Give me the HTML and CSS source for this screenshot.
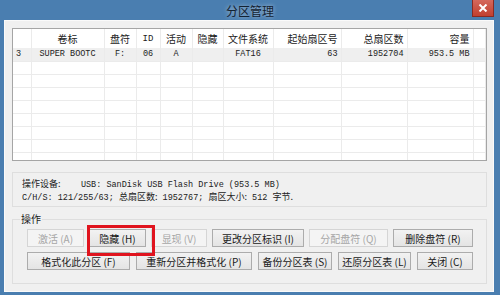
FILE: index.html
```html
<!DOCTYPE html>
<html lang="zh-CN">
<head>
    <meta charset="UTF-8">
    <title>分区管理</title>
    <link rel="stylesheet" href="styles.css">
</head>
<body>
    <div class="window">
        <div class="titlebar">
            <span class="title">分区管理</span>
            <button class="close-btn" title="关闭">
                <svg width="10" height="8" viewBox="0 0 10 8"><path d="M1.5 0.5 L8.5 7.5 M8.5 0.5 L1.5 7.5" stroke="#fff" stroke-width="2"/></svg>
            </button>
        </div>

        <div class="client">
            <div class="list-box">
                <table class="parts">
                    <colgroup>
                        <col style="width:18px"><col style="width:73px"><col style="width:32px">
                        <col style="width:24px"><col style="width:32px"><col style="width:31px">
                        <col style="width:50px"><col style="width:68px"><col style="width:66px">
                        <col style="width:66px"><col>
                    </colgroup>
                    <thead>
                        <tr>
                            <th></th><th>卷标</th><th>盘符</th><th class="mono">ID</th><th>活动</th><th>隐藏</th>
                            <th>文件系统</th><th class="r">起始扇区号</th><th class="r">总扇区数</th><th class="r">容量</th><th></th>
                        </tr>
                    </thead>
                    <tbody>
                        <tr class="sel">
                            <td>3</td><td class="c">SUPER BOOTC</td><td class="c">F:</td><td class="c">06</td><td class="c">A</td><td></td>
                            <td class="c">FAT16</td><td class="r">63</td><td class="r">1952704</td><td class="r">953.5 MB</td><td></td>
                        </tr>
                        <tr><td></td><td></td><td></td><td></td><td></td><td></td><td></td><td></td><td></td><td></td><td></td></tr>
                        <tr><td></td><td></td><td></td><td></td><td></td><td></td><td></td><td></td><td></td><td></td><td></td></tr>
                        <tr><td></td><td></td><td></td><td></td><td></td><td></td><td></td><td></td><td></td><td></td><td></td></tr>
                        <tr><td></td><td></td><td></td><td></td><td></td><td></td><td></td><td></td><td></td><td></td><td></td></tr>
                        <tr><td></td><td></td><td></td><td></td><td></td><td></td><td></td><td></td><td></td><td></td><td></td></tr>
                        <tr><td></td><td></td><td></td><td></td><td></td><td></td><td></td><td></td><td></td><td></td><td></td></tr>
                        <tr><td></td><td></td><td></td><td></td><td></td><td></td><td></td><td></td><td></td><td></td><td></td></tr>
                        <tr><td></td><td></td><td></td><td></td><td></td><td></td><td></td><td></td><td></td><td></td><td></td></tr>
                    </tbody>
                </table>
            </div>

            <div class="info-box">
                <div class="info-line"><span class="cn">操作设备:</span>&nbsp;&nbsp;&nbsp; USB: SanDisk USB Flash Drive (953.5 MB)</div>
                <div class="info-line">C/H/S: 121/255/63; <span class="cn">总扇区数:</span> 1952767; <span class="cn">扇区大小:</span> 512 <span class="cn">字节.</span></div>
            </div>

            <fieldset class="ops">
                <legend>操作</legend>
                <div class="btn-row">
                    <button class="btn w57" disabled>激活 (A)</button>
                    <button class="btn w57 marked">隐藏 (H)</button>
                    <button class="btn w56" disabled>显现 (V)</button>
                    <button class="btn w92">更改分区标识 (I)</button>
                    <button class="btn w79" disabled>分配盘符 (Q)</button>
                    <button class="btn w80">删除盘符 (R)</button>
                </div>
                <div class="btn-row row2">
                    <button class="btn w103">格式化此分区 (F)</button>
                    <button class="btn w116">重新分区并格式化 (P)</button>
                    <button class="btn w74">备份分区表 (S)</button>
                    <button class="btn w73">还原分区表 (L)</button>
                    <button class="btn w56">关闭 (C)</button>
                </div>
            </fieldset>
        </div>
    </div>
</body>
</html>
```

FILE: styles.css
```css
* {
    margin: 0;
    padding: 0;
    box-sizing: border-box;
}

body {
    width: 500px;
    height: 295px;
    overflow: hidden;
    background: #4a7eb0;
    font-family: "Noto Sans CJK SC", sans-serif;
    color: #1a1a1a;
}

.window {
    width: 500px;
    height: 295px;
}

/* Barre de titre */
.titlebar {
    position: relative;
    height: 20px;
    display: flex;
    justify-content: center;
    align-items: center;
}

.title {
    font-size: 12px;
    color: #132232;
    text-shadow: 0 0 4px rgba(255,255,255,0.6);
}

.close-btn {
    position: absolute;
    right: 6px;
    top: 0;
    width: 22px;
    height: 17px;
    border: 1px solid #8a2a22;
    border-top: none;
    background: linear-gradient(#d4685c, #c2402f);
    display: flex;
    justify-content: center;
    align-items: center;
}

.client {
    margin: 0 6px 0 4px;
    height: 272px;
    background: #f0f0f0;
    padding: 7px 6px 0 7px;
    border: 1px solid #fafafa;
}

/* Liste des partitions */
.list-box {
    width: 475px;
    height: 133px;
    overflow: hidden;
    background: #fff;
    border: 1px solid #a5a5a5;
}

.parts {
    width: 100%;
    table-layout: fixed;
    border-collapse: collapse;
    font-size: 8.5px;
    font-family: "Liberation Mono", "Noto Sans CJK SC", monospace;
}

.parts th {
    height: 19px;
    font-family: "Noto Sans CJK SC", sans-serif;
    font-size: 10px;
    font-weight: normal;
    color: #222;
    text-align: center;
    border-right: 1px solid #ebebeb;
    padding: 0 3px;
    white-space: nowrap;
}

.parts th.mono {
    font-family: "Liberation Mono", monospace;
    font-size: 9px;
}

.parts td {
    height: 13px;
    border-right: 1px solid #ebebeb;
    border-bottom: 1px solid #ebebeb;
    padding: 0 3px;
    white-space: nowrap;
    overflow: hidden;
    color: #222;
}

.parts .c { text-align: center; }
.parts .r { text-align: right; }

.parts tr.sel td {
    background: #efefef;
    height: 13px;
}

/* Informations du disque */
.info-box {
    width: 475px;
    height: 35px;
    margin-top: 11px;
    border: 1px solid #dedede;
    padding: 4px 9px 0;
    font-family: "Liberation Mono", "Noto Sans CJK SC", monospace;
    font-size: 8.5px;
    color: #222;
}

.info-line {
    height: 13px;
    line-height: 13px;
    white-space: nowrap;
}

.cn {
    font-family: "Noto Sans CJK SC", sans-serif;
    font-size: 9px;
    line-height: 13px;
}

/* Boutons d'opérations */
.ops {
    position: relative;
    width: 475px;
    height: 71px;
    margin-top: 6px;
    border: 1px solid #dedede;
    padding: 4px 0 0 14px;
}

.ops legend {
    font-size: 10px;
    padding: 0 1px;
    margin-left: -7px;
    line-height: 12px;
}

.btn-row {
    display: flex;
    gap: 5px;
}

.row2 {
    gap: 6px;
    margin-top: 5px;
}

.btn {
    height: 18px;
    font-family: "Noto Sans CJK SC", sans-serif;
    font-size: 10px;
    color: #1a1a1a;
    border: 1px solid #acacac;
    background: linear-gradient(#f2f2f2, #e4e4e4);
    white-space: nowrap;
}

.btn:disabled {
    color: #a6a6a6;
    border-color: #d5d5d5;
    background: #f4f4f4;
}

.btn.marked {
    position: relative;
}

.btn.marked::after {
    content: "";
    position: absolute;
    left: -3px;
    top: -5px;
    width: 62px;
    height: 25px;
    border: 3px solid #e0141e;
}

.w56 { width: 56px; }
.w57 { width: 57px; }
.w73 { width: 73px; }
.w74 { width: 74px; }
.w79 { width: 79px; }
.w80 { width: 80px; }
.w92 { width: 92px; }
.w103 { width: 103px; }
.w116 { width: 116px; }
```
